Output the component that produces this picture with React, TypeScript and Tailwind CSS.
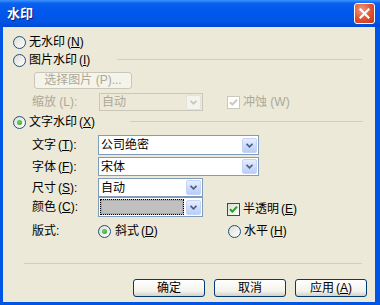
import React from 'react';

const FONT = { fontFamily: '"Liberation Sans", "Noto Sans CJK SC", sans-serif' };

function Radio({ checked }: { checked?: boolean }) {
    return (
        <span className="flex h-[13px] w-[13px] shrink-0 items-center justify-center rounded-full border border-[#1c5180] bg-[linear-gradient(135deg,#dcdcd7,#ffffff)]">
            {checked && <span className="h-[5px] w-[5px] rounded-full bg-[radial-gradient(circle_at_40%_40%,#6fd36f,#21a121)]" />}
        </span>
    );
}

function Check({ checked, disabled }: { checked?: boolean; disabled?: boolean }) {
    return (
        <span
            className={`flex h-[13px] w-[13px] shrink-0 items-center justify-center border ${
                disabled ? 'border-[#cac8bb] bg-white' : 'border-[#1c5180] bg-[linear-gradient(135deg,#dcdcd7,#ffffff)]'
            }`}
        >
            {checked && (
                <svg width="9" height="9" viewBox="0 0 9 9">
                    <path d="M1 4.2 L3.4 6.6 L8 1.6" stroke={disabled ? '#cac8bb' : '#21a121'} strokeWidth="2" fill="none" />
                </svg>
            )}
        </span>
    );
}

function Key({ k, disabled }: { k: string; disabled?: boolean }) {
    return (
        <span className={`ml-[2px] ${disabled ? 'text-[#aca899]' : ''}`}>
            (<span className="underline">{k}</span>)
        </span>
    );
}

function DropBtn({ disabled }: { disabled?: boolean }) {
    return (
        <span
            className={`flex h-[15px] w-[15px] shrink-0 items-center justify-center rounded-[2px] border ${
                disabled
                    ? 'border-[#e4e2d8] bg-[#f4f3ee]'
                    : 'border-[#c3d3fd] bg-[linear-gradient(to_bottom,#e6eefc,#b9cdf8)]'
            }`}
        >
            <svg width="7" height="5" viewBox="0 0 7 5">
                <path d="M0.5 0.8 L3.5 3.8 L6.5 0.8" stroke={disabled ? '#c9c7ba' : '#4d6185'} strokeWidth="1.8" fill="none" />
            </svg>
        </span>
    );
}

function Combo({ value, width, height = 20 }: { value: string; width: string; height?: number }) {
    return (
        <div
            className={`flex ${width} items-center border border-[#7f9db9] bg-white pr-[1px]`}
            style={{ height }}
        >
            <span className="flex-1 pl-[2px] leading-none">{value}</span>
            <DropBtn />
        </div>
    );
}

function XpButton({ children }: { children: React.ReactNode }) {
    return (
        <div className="flex h-[18px] w-[72px] items-center justify-center rounded-[3px] border border-[#003c74] bg-[linear-gradient(to_bottom,#ffffff,#f3f2ec_70%,#d6d0c5)] leading-none">
            {children}
        </div>
    );
}

export default function App() {
    return (
        <div className="flex h-[305px] w-[380px] flex-col overflow-hidden bg-[#0055e5] text-[12px] text-black" style={FONT}>
            {/* Title bar */}
            <div className="flex h-[27px] shrink-0 items-center justify-between bg-[linear-gradient(to_bottom,#3d95ff,#0a61ed_12%,#0058ee_40%,#0055e5_80%,#0049d4)] pl-[7px] pr-[5px]">
                <span className="text-[13px] font-bold text-white [text-shadow:1px_1px_0_#0a1e7c]">水印</span>
                <div className="flex h-[21px] w-[21px] items-center justify-center rounded-[3px] border border-white bg-[radial-gradient(circle_at_35%_30%,#f19a80,#e0502e_55%,#c1391a)]">
                    <svg width="11" height="11" viewBox="0 0 11 11">
                        <path d="M1.5 1.5 L9.5 9.5 M9.5 1.5 L1.5 9.5" stroke="white" strokeWidth="2.2" strokeLinecap="square" />
                    </svg>
                </div>
            </div>

            {/* Body */}
            <div className="ml-[3px] mr-[5px] mb-[3px] flex flex-1 flex-col bg-[#ece9d8] pt-[6px]">
                {/* 无水印 */}
                <div className="flex h-[18px] items-center pl-[10px]">
                    <Radio />
                    <span className="ml-[3px]">无水印<Key k="N" /></span>
                </div>

                {/* 图片水印 */}
                <div className="flex h-[18px] items-center pl-[10px]">
                    <Radio />
                    <span className="ml-[3px]">图片水印<Key k="I" /></span>
                    <div className="ml-auto mr-[13px] h-[2px] w-[245px] border-t border-[#d0cebf] border-b-white" />
                </div>

                <div className="flex h-[22px] items-center pl-[31px]">
                    <div className="flex h-[17px] w-[98px] items-center justify-center rounded-[3px] border border-[#c9c7ba] bg-[#f5f4ea] leading-none text-[#aca899]">
                        选择图片 (P)...
                    </div>
                </div>

                <div className="flex h-[22px] items-center pl-[29px]">
                    <span className="w-[67px] text-[#aca899]">缩放 (L):</span>
                    <div className="flex h-[18px] w-[104px] items-center border border-[#c9c7ba] bg-[#ece9d8] pr-[1px]">
                        <span className="flex-1 pl-[2px] leading-none text-[#aca899]">自动</span>
                        <DropBtn disabled />
                    </div>
                    <div className="ml-[24px] flex items-center">
                        <Check checked disabled />
                        <span className="ml-[3px] text-[#aca899]">冲蚀 (W)</span>
                    </div>
                </div>

                {/* 文字水印 */}
                <div className="flex h-[18px] items-center pl-[10px]">
                    <Radio checked />
                    <span className="ml-[3px]">文字水印<Key k="X" /></span>
                    <div className="ml-auto mr-[12px] h-[2px] w-[233px] border-t border-[#d0cebf]" />
                </div>

                <div className="mt-[4px] flex h-[22px] items-start pl-[29px]">
                    <span className="flex h-[20px] w-[66px] items-center">文字<Key k="T" />:</span>
                    <Combo value="公司绝密" width="w-[161px]" />
                </div>

                <div className="flex h-[21px] items-start pl-[29px]">
                    <span className="flex h-[19px] w-[66px] items-center">字体<Key k="F" />:</span>
                    <Combo value="宋体" width="w-[161px]" height={19} />
                </div>

                <div className="flex h-[19px] items-start pl-[29px]">
                    <span className="flex h-[19px] w-[66px] items-center">尺寸<Key k="S" />:</span>
                    <Combo value="自动" width="w-[105px]" height={19} />
                </div>

                <div className="flex h-[20px] items-start pl-[29px]">
                    <span className="flex h-[20px] w-[66px] items-center">颜色<Key k="C" />:</span>
                    <div className="flex h-[20px] w-[105px] items-center border border-[#7f9db9] bg-white pl-[1px] pr-[1px]">
                        <div className="h-[16px] w-[84px] border border-dotted border-black bg-[#c0c0c0] shadow-[inset_0_0_0_1px_#a8a8a8]" />
                        <span className="flex-1" />
                        <DropBtn />
                    </div>
                    <div className="ml-[24px] flex h-[20px] items-center pt-[4px]">
                        <Check checked />
                        <span className="ml-[3px]">半透明<Key k="E" /></span>
                    </div>
                </div>

                <div className="flex h-[28px] items-center pl-[29px]">
                    <span className="w-[66px]">版式:</span>
                    <div className="flex w-[130px] items-center">
                        <Radio checked />
                        <span className="ml-[4px]">斜式<Key k="D" /></span>
                    </div>
                    <div className="flex items-center">
                        <Radio />
                        <span className="ml-[3px]">水平<Key k="H" /></span>
                    </div>
                </div>

                <div className="mt-[18px] ml-[21px] mr-[13px] h-[2px] border-t border-[#d0cebf]" />

                <div className="mt-[14px] mr-[8px] flex justify-end gap-[9px]">
                    <XpButton>确定</XpButton>
                    <XpButton>取消</XpButton>
                    <XpButton>应用<Key k="A" /></XpButton>
                </div>
            </div>
        </div>
    );
}
